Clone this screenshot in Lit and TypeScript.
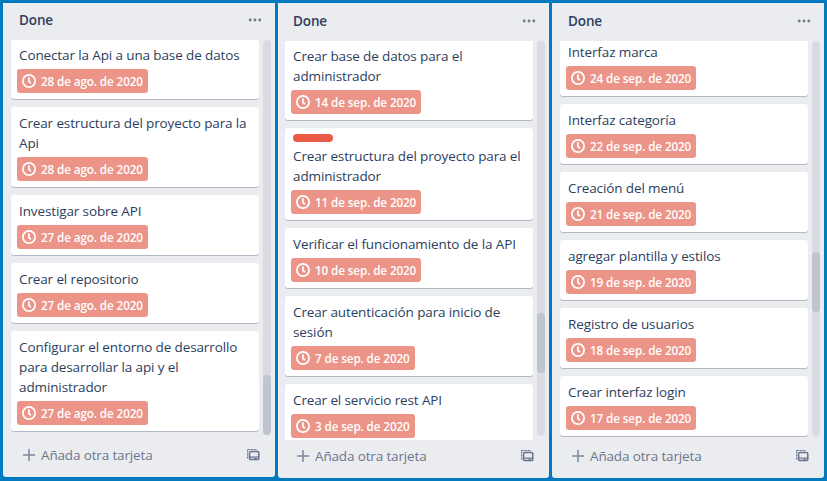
import { LitElement, html, css, svg, nothing } from "lit";
import { customElement, property } from "lit/decorators.js";
import { classMap } from "lit/directives/class-map.js";

interface Card {
  title: string[];
  due: string;
  label?: boolean;
}

interface List {
  name: string;
  scroll: number;
  thumb: number;
  cards: Card[];
}

const lists: List[] = [
  {
    name: "first",
    scroll: 1,
    thumb: 335,
    cards: [
      { title: ["Conectar la Api a una base de datos"], due: "28 de ago. de 2020" },
      { title: ["Crear estructura del proyecto para la", "Api"], due: "28 de ago. de 2020" },
      { title: ["Investigar sobre API"], due: "27 de ago. de 2020" },
      { title: ["Crear el repositorio"], due: "27 de ago. de 2020" },
      {
        title: ["Configurar el entorno de desarrollo", "para desarrollar la api y el", "administrador"],
        due: "27 de ago. de 2020",
      },
    ],
  },
  {
    name: "second",
    scroll: 1,
    thumb: 272,
    cards: [
      { title: ["Crear base de datos para el", "administrador"], due: "14 de sep. de 2020" },
      {
        title: ["Crear estructura del proyecto para el", "administrador"],
        due: "11 de sep. de 2020",
        label: true,
      },
      { title: ["Verificar el funcionamiento de la API"], due: "10 de sep. de 2020" },
      { title: ["Crear autenticación para inicio de", "sesión"], due: "7 de sep. de 2020" },
      { title: ["Crear el servicio rest API"], due: "3 de sep. de 2020" },
    ],
  },
  {
    name: "third",
    scroll: 5,
    thumb: 211,
    cards: [
      { title: ["Interfaz marca"], due: "24 de sep. de 2020" },
      { title: ["Interfaz categoría"], due: "22 de sep. de 2020" },
      { title: ["Creación del menú"], due: "21 de sep. de 2020" },
      { title: ["agregar plantilla y estilos"], due: "19 de sep. de 2020" },
      { title: ["Registro de usuarios"], due: "18 de sep. de 2020" },
      { title: ["Crear interfaz login"], due: "17 de sep. de 2020" },
    ],
  },
];

const clockIcon = html`<svg class="clock" width="16" height="16" viewBox="0 0 16 16" fill="none" stroke="#fff">
  ${svg`<circle cx="8" cy="8" r="6.1" stroke-width="1.8"/><path d="M7.9 4.2V8.3L9.9 10.4" stroke-width="1.7"/>`}
</svg>`;

const plusIcon = html`<svg width="14" height="14" viewBox="0 0 14 14" stroke="#7b869a" stroke-width="1.5">
  <path d="M7 1V13M1 7H13" />
</svg>`;

const moreIcon = html`<svg width="14" height="4" viewBox="0 0 14 4" fill="#6b778c">
  <circle cx="2.2" cy="2" r="1.4" /><circle cx="7" cy="2" r="1.4" /><circle cx="11.8" cy="2" r="1.4" />
</svg>`;

const templateIcon = html`<svg width="14" height="14" viewBox="0 0 14 14" fill="none" stroke="#65728a">
  <path d="M1.6 10.6V1.5H11" stroke-width="1.2" stroke-dasharray="2.2 .8" />
  <rect x="3.6" y="3.6" width="9.2" height="8" rx="1.2" stroke-width="1.5" />
  <path d="M4 9.1H12.5" stroke-width="1.2" />
  <path d="M8.6 10.4H10.6" stroke-width="1.4" />
</svg>`;

@customElement("board-card")
class BoardCard extends LitElement {
  @property({ attribute: false }) card!: Card;

  static styles = css`
    :host {
      display: block;
      flex: none;
      box-sizing: border-box;
      padding: 6px 8px;
      border-radius: 3px;
      background: #fff;
      box-shadow: 0 1px 0 #b1b7c5;
    }
    .label {
      width: 40px;
      height: 8px;
      margin-bottom: 4px;
      border-radius: 4px;
      background: #eb5a46;
    }
    .line {
      height: 20px;
      line-height: 20px;
      white-space: nowrap;
    }
    .due {
      display: flex;
      align-items: center;
      width: fit-content;
      height: 24px;
      box-sizing: border-box;
      margin: 4px 0 0 -2px;
      padding: 0 5px 0 4px;
      gap: 4px;
      border-radius: 3px;
      background: #ec9488;
      color: #fff;
      font-size: 11.7px;
      font-weight: 600;
      letter-spacing: -0.11px;
      white-space: nowrap;
    }
    .clock {
      flex: none;
    }
  `;

  render() {
    return html`
      ${this.card.label ? html`<div class="label"></div>` : nothing}
      ${this.card.title.map((line) => html`<div class="line">${line}</div>`)}
      <div class="due">${clockIcon}<span>${this.card.due}</span></div>
    `;
  }
}

@customElement("board-list")
class BoardList extends LitElement {
  @property({ attribute: false }) list!: List;

  static styles = css`
    :host {
      display: block;
    }
    .list {
      display: flex;
      flex-direction: column;
      box-sizing: border-box;
      width: 272px;
      height: 475px;
      padding-left: 8px;
      border-radius: 0 0 3px 3px;
      background: #ebecf0;
    }
    .first {
      height: 474px;
    }
    .second {
      width: 271px;
      padding-left: 7px;
    }
    .head {
      display: flex;
      flex: none;
      align-items: center;
      justify-content: space-between;
      height: 38px;
      box-sizing: border-box;
      padding: 0 13px 2px 8px;
      font-weight: 600;
    }
    .first .head {
      height: 37px;
      padding-bottom: 3px;
    }
    .body {
      display: flex;
      flex: none;
      gap: 4px;
      height: 399px;
    }
    .cards {
      display: flex;
      flex-direction: column;
      gap: 8px;
      width: 248px;
      height: 399px;
      overflow: hidden;
    }
    .track {
      width: 8px;
      height: 395px;
      border-radius: 4px;
      background: #dadbe2;
    }
    .thumb {
      height: 60px;
      border-radius: 4px;
      background: #bfc4ce;
    }
    .foot {
      display: flex;
      flex: none;
      align-items: center;
      height: 32px;
      padding: 0 15px 0 11px;
      color: #6b778c;
    }
    .add {
      flex: 1;
      margin-left: 5px;
      letter-spacing: -0.15px;
    }
  `;

  render() {
    const { name, scroll, thumb, cards } = this.list;
    return html`
      <section class=${classMap({ list: true, [name]: true })}>
        <header class="head"><span>Done</span>${moreIcon}</header>
        <div class="body">
          <div class="cards">
            ${cards.map(
              (card, i) =>
                html`<board-card .card=${card} style=${i === 0 ? `margin-top:${-scroll}px` : nothing}></board-card>`
            )}
          </div>
          <div class="track"><div class="thumb" style=${`transform:translateY(${thumb}px)`}></div></div>
        </div>
        <footer class="foot">${plusIcon}<span class="add">Añada otra tarjeta</span>${templateIcon}</footer>
      </section>
    `;
  }
}

@customElement("app-root")
class AppRoot extends LitElement {
  static styles = css`
    :host {
      display: flex;
      gap: 3px;
      box-sizing: border-box;
      width: 827px;
      height: 481px;
      padding: 3px;
      overflow: hidden;
      background: #0079bf;
      color: #2c3e5d;
      font: 13.5px "Open Sans", "Noto Sans", sans-serif;
      letter-spacing: -0.12px;
    }
  `;

  render() {
    return lists.map((list) => html`<board-list .list=${list}></board-list>`);
  }
}
